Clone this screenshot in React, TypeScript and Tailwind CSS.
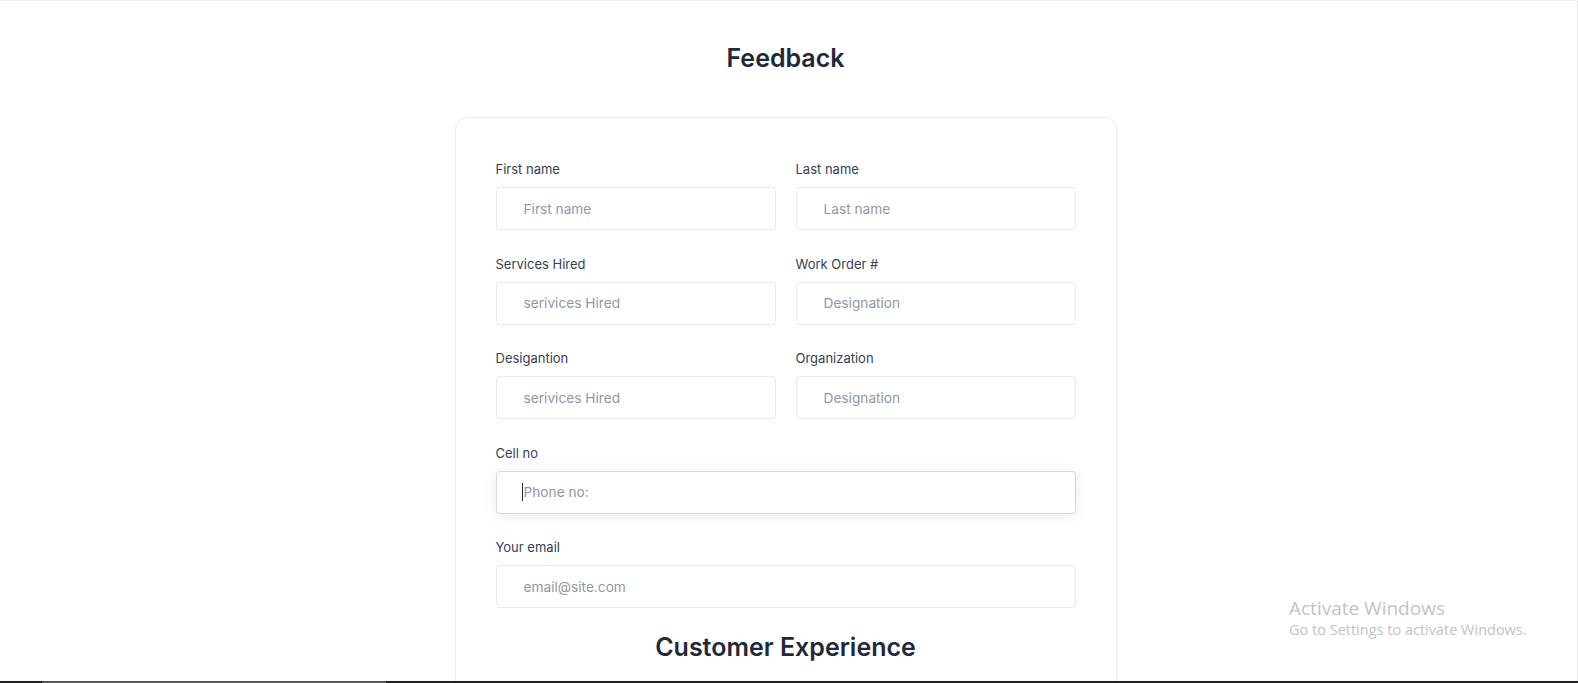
import React from "react";

type Field = {
  label: string;
  placeholder: string;
  focused?: boolean;
};

const pairs: [Field, Field][] = [
  [
    { label: "First name", placeholder: "First name" },
    { label: "Last name", placeholder: "Last name" },
  ],
  [
    { label: "Services Hired", placeholder: "serivices Hired" },
    { label: "Work Order #", placeholder: "Designation" },
  ],
  [
    { label: "Desigantion", placeholder: "serivices Hired" },
    { label: "Organization", placeholder: "Designation" },
  ],
];

function FormField({ label, placeholder, focused }: Field) {
  return (
    <div>
      <label className="mb-2 block text-[13px] leading-5 text-gray-700">{label}</label>
      <div className="relative">
        <input
          type="text"
          placeholder={placeholder}
          className={
            focused
              ? "block h-[43px] w-full rounded border border-[#d6d9de] bg-white pl-[27px] pr-4 text-[13.7px] text-gray-800 shadow-[0_2px_14px_rgba(0,0,0,0.09)] outline-none placeholder:text-[#8f98a5]"
              : "block h-[43px] w-full rounded border border-[#e7e9ec] bg-white pl-[27px] pr-4 text-[13.7px] text-gray-800 outline-none placeholder:text-[#8f98a5]"
          }
        />
        {focused && (
          <span className="pointer-events-none absolute left-[26px] top-[12px] h-[18px] w-px bg-gray-800" />
        )}
      </div>
    </div>
  );
}

export default function App() {
  return (
    <div
      className="relative flex h-[683px] flex-col overflow-hidden border-t border-[#f1f2f4] bg-white"
      style={{ fontFamily: "Inter, 'Noto Sans', sans-serif" }}
    >
      <div className="flex min-h-0 flex-1">
        <main className="min-w-0 flex-1 overflow-hidden">
          <h1 className="pt-[41px] text-center text-[25px] font-semibold leading-8 text-[#1e293b]">
            Feedback
          </h1>

          <div className="mx-auto mt-[43px] w-[662px] rounded-xl border border-[#e8eaed] px-10 pb-10 pt-[41px]">
            <div className="flex flex-col gap-[23.5px]">
              {pairs.map(([a, b]) => (
                <div key={a.label} className="grid grid-cols-2 gap-x-5">
                  <FormField {...a} />
                  <FormField {...b} />
                </div>
              ))}
              <FormField label="Cell no" placeholder="Phone no:" focused />
              <FormField label="Your email" placeholder="email@site.com" />
            </div>

            <h2 className="mt-[23px] text-center text-[25px] font-semibold leading-8 text-[#1e293b]">
              Customer Experience
            </h2>
          </div>
        </main>
        <div className="w-[7px] shrink-0 border-r border-[#e3e3e3] bg-white" />
      </div>

      <div className="flex h-[2px] shrink-0 bg-[#202020]">
        <div className="w-[42px]" />
        <div className="w-[344px] bg-[#555555]" />
      </div>

      <div
        className="pointer-events-none absolute left-[1289px] top-[595px] text-[#c3c3c3]"
        style={{ fontFamily: "'Open Sans', 'Noto Sans', sans-serif" }}
      >
        <div className="text-[19px] leading-6">Activate Windows</div>
        <div className="text-[14.5px] leading-5">Go to Settings to activate Windows.</div>
      </div>
    </div>
  );
}
